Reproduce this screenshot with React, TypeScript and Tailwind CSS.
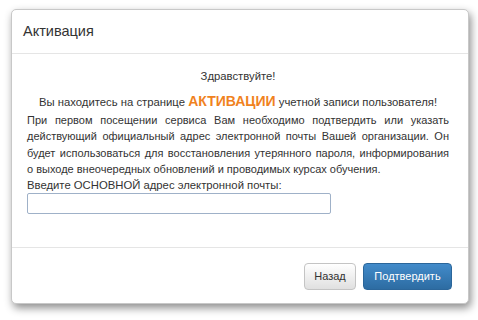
export default function App() {
  return (
    <div className="w-[478px] h-[320px] bg-white pt-[9px] pl-[11px] font-['Liberation_Sans',Arial,sans-serif]">
      <div className="w-[458px] h-[295px] flex flex-col bg-white border border-[#c8c8c8] rounded-[5px] shadow-[2px_4px_8px_rgba(0,0,0,0.45)]">
        {/* Header */}
        <div className="h-[44px] flex items-center px-[11px] border-b border-[#e5e5e5] shrink-0">
          <h1 className="text-[14.5px] text-[#333]">Активация</h1>
        </div>

        {/* Body */}
        <div className="flex-1 pl-[15px] pr-[19px] pt-[14px] text-[11.3px] text-[#333] leading-[16.5px]">
          <p className="text-center">Здравствуйте!</p>
          <p className="text-center mt-[6px] leading-[20px]">
            Вы находитесь на странице{' '}
            <span className="text-[14px] font-bold text-[#f0821e]">АКТИВАЦИИ</span>{' '}
            учетной записи пользователя!
          </p>
          <p className="text-justify text-[11px]">
            При первом посещении сервиса Вам необходимо подтвердить или указать действующий официальный адрес
            электронной почты Вашей организации. Он будет использоваться для восстановления утерянного пароля,
            информирования о выходе внеочередных обновлений и проводимых курсах обучения.
          </p>
          <p className="leading-[14px]">Введите ОСНОВНОЙ адрес электронной почты:</p>
          <input
            type="text"
            className="mt-[1px] w-[304px] h-[21px] border border-[#9fb1c8] rounded-[2px] outline-none"
          />
        </div>

        {/* Footer */}
        <div className="h-[56px] border-t border-[#e5e5e5] flex items-start justify-end gap-[7px] pt-[15px] pr-[16px] shrink-0">
          <button className="h-[27px] w-[52px] text-[11px] text-[#333] rounded-[4px] border border-[#c4c4c4] bg-gradient-to-b from-white to-[#e0e0e0]">
            Назад
          </button>
          <button className="h-[27px] w-[89px] text-[11px] text-white rounded-[4px] border border-[#2b669a] bg-gradient-to-b from-[#428bca] to-[#2d6ca2]">
            Подтвердить
          </button>
        </div>
      </div>
    </div>
  );
}
